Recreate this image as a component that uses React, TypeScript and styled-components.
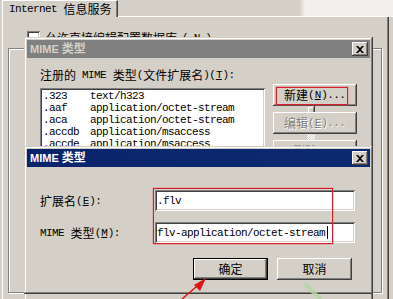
import styled, { createGlobalStyle } from 'styled-components';

const Global = createGlobalStyle`
    html, body {
        margin: 0;
        padding: 0;
        background: #d4d0c8;
    }
`;

const Desktop = styled.div`
    position: relative;
    width: 393px;
    height: 299px;
    overflow: hidden;
    background: #d4d0c8;
    color: #000;
    font-family: "Liberation Mono", "Noto Sans CJK SC", monospace;
    font-size: 11px;
    line-height: 12px;
`;

const Lat = styled.span<{ $bold?: boolean }>`
    font-family: ${(p) => (p.$bold ? '"Liberation Sans", Arial, sans-serif' : '"Liberation Mono", monospace')};
    font-size: 11px;
    font-weight: ${(p) => (p.$bold ? 700 : 400)};
    letter-spacing: ${(p) => (p.$bold ? '0' : '-0.6px')};
    padding-right: ${(p) => (p.$bold ? '0' : '0.6px')};
    white-space: pre;
`;

const Han = styled.span<{ $bold?: boolean }>`
    font-family: "Noto Sans CJK SC", sans-serif;
    font-size: 12px;
    font-weight: ${(p) => (p.$bold ? 700 : 400)};
    white-space: pre;
`;

const HAN = /[\u3000-\u9fff\uff00-\uffef]/;

// "&X" marks the underlined access key
function Txt({ t, bold }: { t: string; bold?: boolean }) {
    const parts = t.split(/([\u3000-\u9fff\uff00-\uffef]+|&.)/);
    return (
        <>
            {parts.map((p, i) => {
                if (!p) return null;
                if (p[0] === '&')
                    return (
                        <Lat key={i} $bold={bold}>
                            <u>{p[1]}</u>
                        </Lat>
                    );
                if (HAN.test(p)) return <Han key={i} $bold={bold}>{p}</Han>;
                return <Lat key={i} $bold={bold}>{p}</Lat>;
            })}
        </>
    );
}

/* ---------- back window (IIS properties) ---------- */

const Back = styled.div`
    display: flex;
    flex-direction: column;
    height: 299px;
    padding: 0 4px 0 2px;
    box-sizing: border-box;
`;

const TabStrip = styled.div`
    display: flex;
    height: 17px;
    margin-right: -4px;
`;

const Tab = styled.div`
    width: 116px;
    box-sizing: border-box;
    display: flex;
    align-items: center;
    padding-left: 6px;
    border-top: 1px solid #fff;
    border-left: 1px solid #fff;
    border-right: 1px solid #404040;
    box-shadow: inset -1px 0 #808080;
`;

const TabFill = styled.div`
    flex: 1;
    border-bottom: 1px solid #fff;
    background: linear-gradient(to right, #d4d0c8 66%, #f1f0ec 68%);
`;

const Panel = styled.div`
    flex: 1;
    display: flex;
    flex-direction: column;
    padding: 14px 6px 6px 5px;
    border-left: 1px solid #fff;
    border-right: 1px solid #404040;
    box-shadow: inset -1px 0 #808080;
`;

const CheckRow = styled.div`
    display: flex;
    align-items: center;
    gap: 5px;
    margin-left: 19px;
`;

const CheckBox = styled.div`
    width: 13px;
    height: 13px;
    box-sizing: border-box;
    background: #fff;
    box-shadow: inset 1px 1px #808080, inset -1px -1px #fff, inset 2px 2px #404040, inset -2px -2px #d4d0c8;
`;

const Group = styled.div`
    flex: 1;
    margin: 4px 0 0 0;
    border: 1px solid #808080;
    box-shadow: inset 1px 1px #fff, 1px 1px #fff;
`;

/* ---------- dialogs ---------- */

const Win = styled.div<{ $x: number; $y: number; $w: number; $h: number }>`
    position: absolute;
    left: ${(p) => p.$x}px;
    top: ${(p) => p.$y}px;
    width: ${(p) => p.$w}px;
    height: ${(p) => p.$h}px;
    box-sizing: border-box;
    padding: 3px;
    background: #d4d0c8;
    box-shadow: inset -1px -1px #404040, inset 1px 1px #d4d0c8, inset -2px -2px #808080, inset 2px 2px #fff;
    display: flex;
    flex-direction: column;
`;

const TitleBar = styled.div<{ $active?: boolean }>`
    height: 18px;
    flex: none;
    display: flex;
    align-items: center;
    justify-content: space-between;
    padding: 0 2px 0 3px;
    background: ${(p) => (p.$active ? 'linear-gradient(to right, #0a246a, #0c2a72)' : '#808080')};
    color: ${(p) => (p.$active ? '#fff' : '#d4d0c8')};
`;

const CloseBtn = styled.div`
    width: 16px;
    height: 14px;
    box-sizing: border-box;
    display: flex;
    align-items: center;
    justify-content: center;
    background: #d4d0c8;
    box-shadow: inset -1px -1px #404040, inset 1px 1px #fff, inset -2px -2px #808080, inset 2px 2px #d4d0c8;
`;

const Btn = styled.div<{ $w: number; $default?: boolean; $disabled?: boolean }>`
    width: ${(p) => p.$w}px;
    height: 22px;
    flex: none;
    box-sizing: border-box;
    display: flex;
    align-items: center;
    justify-content: center;
    background: #d4d0c8;
    color: ${(p) => (p.$disabled ? '#808080' : '#000')};
    text-shadow: ${(p) => (p.$disabled ? '1px 1px 0 #fff' : 'none')};
    box-shadow: ${(p) =>
        p.$default
            ? 'inset -1px -1px #000, inset 1px 1px #000, inset -2px -2px #404040, inset 2px 2px #fff, inset -3px -3px #808080'
            : 'inset -1px -1px #404040, inset 1px 1px #fff, inset -2px -2px #808080, inset 2px 2px #d4d0c8'};
`;

const Body1 = styled.div`
    display: flex;
    flex-direction: column;
    padding: 11px 0 0 13px;
`;

const MainRow = styled.div`
    display: flex;
    align-items: flex-start;
    gap: 8px;
    margin-top: 3px;
`;

const ListBox = styled.div`
    width: 225px;
    height: 122px;
    margin-top: 4px;
    box-sizing: border-box;
    padding: 2px;
    display: flex;
    background: #fff;
    box-shadow: inset 1px 1px #808080, inset -1px -1px #fff, inset 2px 2px #404040, inset -2px -2px #d4d0c8;
`;

const Rows = styled.div`
    flex: 1;
    padding-left: 1px;
`;

const Row = styled.div`
    display: flex;
    height: 12px;
    align-items: center;
`;

const Ext = styled.div`
    width: 47px;
`;

const ScrollBar = styled.div`
    width: 16px;
    display: flex;
    flex-direction: column;
    background: repeating-conic-gradient(#d4d0c8 0 25%, #fff 0 50%) 0 0 / 2px 2px;
`;

const ScrollBtn = styled.div<{ $h: number }>`
    height: ${(p) => p.$h}px;
    display: flex;
    align-items: center;
    justify-content: center;
    background: #d4d0c8;
    box-shadow: inset -1px -1px #404040, inset 1px 1px #d4d0c8, inset -2px -2px #808080, inset 2px 2px #fff;
`;

const UpArrow = styled.div`
    width: 0;
    height: 0;
    border-left: 4px solid transparent;
    border-right: 4px solid transparent;
    border-bottom: 4px solid #000;
    margin-top: -1px;
`;

const SideButtons = styled.div`
    display: flex;
    flex-direction: column;
    gap: 6px;
`;

const Body2 = styled.div`
    display: flex;
    flex-direction: column;
    padding: 23px 15px 0 13px;
`;

const Form = styled.div`
    display: grid;
    grid-template-columns: 115px 200px;
    row-gap: 11px;
    align-items: center;
`;

const Label = styled.div`
    display: flex;
    align-items: center;
`;

const Field = styled.div`
    height: 21px;
    box-sizing: border-box;
    padding: 0 2px;
    display: flex;
    align-items: center;
    background: #fff;
    box-shadow: inset 1px 1px #808080, inset -1px -1px #fff, inset 2px 2px #404040, inset -2px -2px #d4d0c8;
`;

const Caret = styled.span`
    display: inline-block;
    width: 1px;
    height: 13px;
    margin-left: 1px;
    background: #000;
`;

const ButtonRow = styled.div`
    display: flex;
    justify-content: flex-end;
    gap: 9px;
    margin: 15px 3px 0 0;
`;

/* ---------- annotations drawn over the screenshot ---------- */

const Mark = styled.div<{ $x: number; $y: number; $w: number; $h: number }>`
    position: absolute;
    left: ${(p) => p.$x}px;
    top: ${(p) => p.$y}px;
    width: ${(p) => p.$w}px;
    height: ${(p) => p.$h}px;
    box-sizing: border-box;
    border: 1.5px solid #d4202e;
    box-shadow: 0 0 0 0.5px rgba(230, 90, 100, 0.6);
`;

const Overlay = styled.svg`
    position: absolute;
    left: 0;
    top: 0;
    pointer-events: none;
`;

const rows = [
    ['.323', 'text/h323'],
    ['.aaf', 'application/octet-stream'],
    ['.aca', 'application/octet-stream'],
    ['.accdb', 'application/msaccess'],
    ['.accde', 'application/msaccess'],
    ['.acx', 'application/internet-property-stream'],
    ['.ai', 'application/postscript'],
    ['.aif', 'audio/x-aiff'],
    ['.aifc', 'audio/aiff'],
];

function CloseIcon() {
    return (
        <svg width="8" height="7" viewBox="0 0 8 7">
            <path d="M0 0h2l2 2 2-2h2l-3 3.5L8 7H6L4 5 2 7H0l3-3.5z" fill="#000" />
        </svg>
    );
}

function App() {
    return (
        <Desktop>
            <Global />
            <Back>
                <TabStrip>
                    <Tab>
                        <Txt t="Internet 信息服务" />
                    </Tab>
                    <TabFill />
                </TabStrip>
                <Panel>
                    <CheckRow>
                        <CheckBox />
                        <Txt t="允许直接编辑配置数据库(&N)" />
                    </CheckRow>
                    <Group />
                </Panel>
            </Back>

            <Win $x={24} $y={37} $w={349} $h={272}>
                <TitleBar>
                    <span>
                        <Txt t="MIME 类型" bold />
                    </span>
                    <CloseBtn>
                        <CloseIcon />
                    </CloseBtn>
                </TitleBar>
                <Body1>
                    <Label>
                        <Txt t="注册的 MIME 类型(文件扩展名)(&T):" />
                    </Label>
                    <MainRow>
                        <ListBox>
                            <Rows>
                                {rows.map(([ext, type]) => (
                                    <Row key={ext}>
                                        <Ext>
                                            <Lat>{ext}</Lat>
                                        </Ext>
                                        <Lat>{type}</Lat>
                                    </Row>
                                ))}
                            </Rows>
                            <ScrollBar>
                                <ScrollBtn $h={16}>
                                    <UpArrow />
                                </ScrollBtn>
                                <ScrollBtn $h={8} />
                            </ScrollBar>
                        </ListBox>
                        <SideButtons>
                            <Btn $w={84}>
                                <Txt t="新建(&N)..." />
                            </Btn>
                            <Btn $w={84} $disabled>
                                <Txt t="编辑(&E)..." />
                            </Btn>
                            <Btn $w={84} $disabled>
                                <Txt t="删除(&R)" />
                            </Btn>
                        </SideButtons>
                    </MainRow>
                </Body1>
            </Win>

            <Win $x={24} $y={146} $w={349} $h={148}>
                <TitleBar $active>
                    <span>
                        <Txt t="MIME 类型" bold />
                    </span>
                    <CloseBtn>
                        <CloseIcon />
                    </CloseBtn>
                </TitleBar>
                <Body2>
                    <Form>
                        <Label>
                            <Txt t="扩展名(&E):" />
                        </Label>
                        <Field>
                            <Lat>.flv</Lat>
                        </Field>
                        <Label>
                            <Txt t="MIME 类型(&M):" />
                        </Label>
                        <Field>
                            <Lat>flv-application/octet-stream</Lat>
                            <Caret />
                        </Field>
                    </Form>
                    <ButtonRow>
                        <Btn $w={75} $default>
                            <Txt t="确定" />
                        </Btn>
                        <Btn $w={75}>
                            <Txt t="取消" />
                        </Btn>
                    </ButtonRow>
                </Body2>
            </Win>

            <Mark $x={276} $y={87} $w={72} $h={18} />
            <Mark $x={153} $y={188} $w={180} $h={56} />

            <Overlay width="393" height="299" viewBox="0 0 393 299">
                <path d="M305 284 L320 299" stroke="#b6d6a4" strokeWidth="4" strokeLinecap="round" opacity="0.8" />
                <path d="M182 299 L200 283.5" stroke="#d81818" strokeWidth="1.5" />
                <path d="M206 278 L200 291 L194 285 Z" fill="#e01414" />
            </Overlay>
        </Desktop>
    );
}

export default App;
